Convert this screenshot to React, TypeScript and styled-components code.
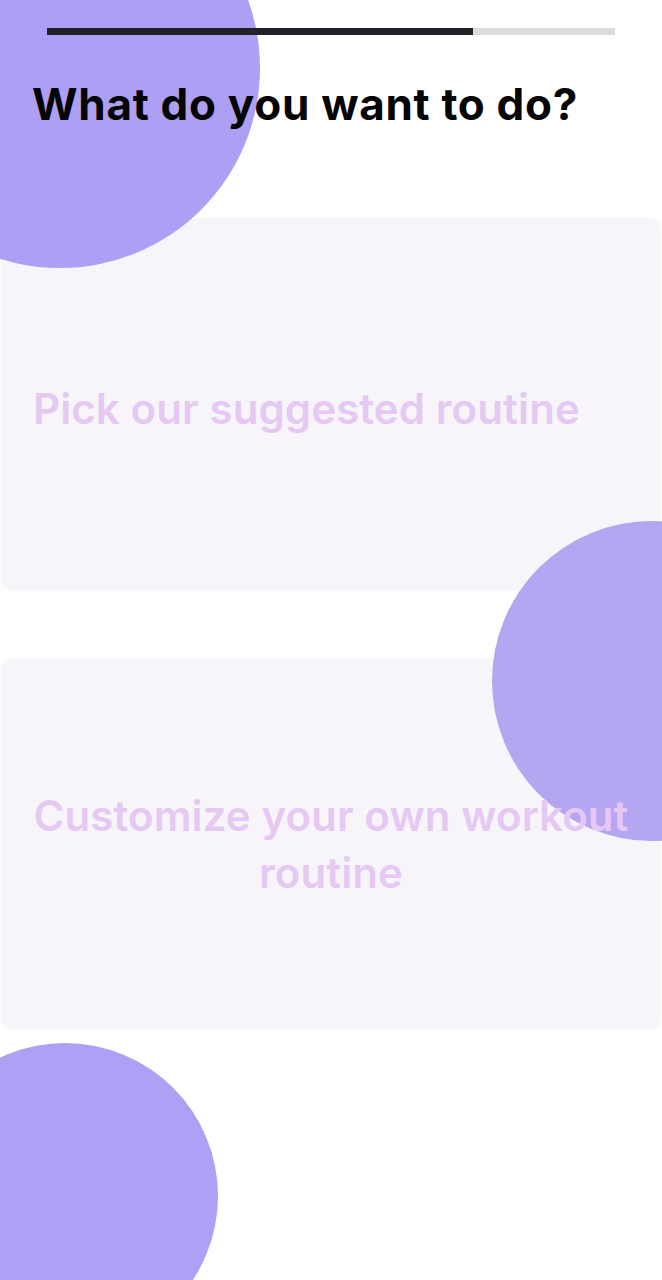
import React from 'react';
import styled, { createGlobalStyle } from 'styled-components';

const GlobalStyle = createGlobalStyle`
    html, body {
        margin: 0;
        padding: 0;
        background: #ffffff;
    }
    body {
        font-family: Inter, 'Noto Sans', sans-serif;
    }
`;

const Page = styled.div`
    position: relative;
    width: 662px;
    height: 1280px;
    overflow: hidden;
    background: #ffffff;
    display: flex;
    flex-direction: column;
`;

const Blob = styled.div<{ $x: number; $y: number; $r: number; $color: string }>`
    position: absolute;
    left: ${p => p.$x - p.$r}px;
    top: ${p => p.$y - p.$r}px;
    width: ${p => p.$r * 2}px;
    height: ${p => p.$r * 2}px;
    border-radius: 50%;
    background: ${p => p.$color};
    z-index: 1;
`;

const Progress = styled.div`
    margin: 28px 47px 0;
    height: 7px;
    background: #dcdcdc;
    display: flex;
    position: relative;
    z-index: 2;
`;

const ProgressFill = styled.div`
    background: #222127;
    height: 100%;
`;

const Heading = styled.h1`
    position: relative;
    z-index: 2;
    margin: 41px 0 0 32px;
    font-size: 44px;
    line-height: 56px;
    font-weight: 700;
    color: #050505;
    letter-spacing: 0.7px;
`;

const Options = styled.div`
    display: flex;
    flex-direction: column;
    gap: 69px;
    margin-top: 86px;
`;

const Card = styled.button<{ $height: number; $lift: number }>`
    height: ${p => p.$height}px;
    margin: 0 1px;
    border: none;
    border-radius: 12px;
    background: #f7f5fa;
    box-shadow: 0 1px 3px rgba(120, 100, 160, 0.06);
    display: flex;
    align-items: center;
    justify-content: center;
    padding: ${p => 8 - p.$lift}px 32px 0;
    cursor: pointer;
`;

const CardLabel = styled.span<{ $align: 'left' | 'center' }>`
    position: relative;
    z-index: 2;
    width: 100%;
    text-align: ${p => p.$align};
    font-family: Inter, 'Noto Sans', sans-serif;
    font-size: 42px;
    line-height: 57px;
    font-weight: 600;
    color: #e5c9f3;
    letter-spacing: 0.1px;
`;

const App = () => (
    <Page>
        <GlobalStyle />
        <Blob $x={60} $y={68} $r={200} $color="#ad9ff4" />
        <Blob $x={652} $y={681} $r={160} $color="#b5a6f2" />
        <Blob $x={65} $y={1196} $r={153} $color="#afa0f5" />
        <Progress>
            <ProgressFill style={{ width: `${(426 / 568) * 100}%` }} />
        </Progress>
        <Heading>What do you want to do?</Heading>
        <Options>
            <Card $height={372} $lift={0}>
                <CardLabel $align="left">Pick our suggested routine</CardLabel>
            </Card>
            <Card $height={370} $lift={8}>
                <CardLabel $align="center">Customize your own workout routine</CardLabel>
            </Card>
        </Options>
    </Page>
);

export default App;
